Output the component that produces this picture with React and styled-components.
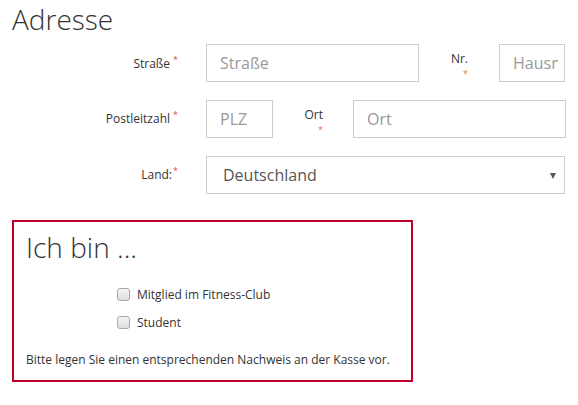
import React from "react";
import styled, { createGlobalStyle } from "styled-components";

const Global = createGlobalStyle`
  html, body { margin: 0; padding: 0; background: #fff; }
  body { font-family: "Open Sans", "Liberation Sans", sans-serif; color: #333; }
  * { box-sizing: border-box; }
`;

const Page = styled.div`
  width: 578px;
  height: 405px;
  padding: 0 0 0 12px;
  overflow: hidden;
`;

const Title = styled.h2`
  margin: 0;
  padding-top: 1px;
  height: 44px;
  font-weight: 300;
  font-size: 28px;
  line-height: 36px;
  color: #333;
`;

const Form = styled.div`
  display: flex;
  flex-direction: column;
  gap: 18px;
`;

const Row = styled.div`
  display: flex;
  align-items: flex-start;
`;

const Label = styled.label`
  width: ${(p) => p.$w}px;
  margin-left: ${(p) => p.$ml || 0}px;
  margin-right: ${(p) => p.$mr || 0}px;
  padding-top: ${(p) => p.$pt ?? 9}px;
  text-align: right;
  font-size: 12px;
  line-height: 13px;
  color: #333;
  flex: none;
`;

const Star = styled.span`
  color: #d9534f;
  font-size: 9px;
  vertical-align: 5px;
  margin-left: ${(p) => p.$gap ?? 3}px;
`;

const WrapStar = styled.span`
  color: #e07a3a;
  font-size: 9px;
  line-height: 9px;
  display: block;
  margin-top: 4px;
`;

const Input = styled.input`
  width: ${(p) => p.$w}px;
  height: 38px;
  flex: none;
  border: 1px solid #ccc;
  border-radius: 0;
  padding: 0 6px 0 13px;
  font-family: "Open Sans", "Liberation Sans", sans-serif;
  font-size: 16px;
  color: #555;
  background: #fff;
  outline: none;
  &::placeholder { color: #999; }
`;

const SelectBox = styled.div`
  position: relative;
  width: ${(p) => p.$w}px;
  height: 38px;
  border: 1px solid #ccc;
  display: flex;
  align-items: center;
  padding: 0 16px;
  font-size: 16px;
  color: #555;
`;

const Arrow = styled.span`
  position: absolute;
  right: 8px;
  top: 16px;
  width: 0;
  height: 0;
  border-left: 3px solid transparent;
  border-right: 3px solid transparent;
  border-top: 6px solid #555;
`;

const Box = styled.section`
  margin-top: 26px;
  width: 401px;
  height: 162px;
  border: 2px solid #c0002b;
  padding: 7px 12px 0 12px;
  display: flex;
  flex-direction: column;
`;

const BoxTitle = styled.h3`
  margin: 0;
  font-weight: 300;
  font-size: 28px;
  line-height: 36px;
  color: #333;
`;

const Checks = styled.div`
  margin-top: 21px;
  padding-left: 91px;
  display: flex;
  flex-direction: column;
  gap: 11px;
`;

const CheckRow = styled.label`
  display: flex;
  align-items: center;
  gap: 7px;
  font-size: 12px;
  line-height: 17px;
  color: #333;
`;

const Check = styled.span`
  width: 13px;
  height: 13px;
  border: 1px solid #a9a9a9;
  border-radius: 3px;
  background: linear-gradient(#f4f4f4, #dedede);
  flex: none;
`;

const Note = styled.p`
  margin: 20px 0 0 0;
  font-size: 12px;
  line-height: 17px;
  color: #333;
`;

export default function App() {
  return (
    <>
      <Global />
      <Page>
        <Title>Adresse</Title>
        <Form>
          <Row>
            <Label $w={166} $mr={28} $pt={9}>
              Straße<Star>*</Star>
            </Label>
            <Input $w={213} placeholder="Straße" />
            <Label $w={18} $ml={31} $mr={31} $pt={8}>
              Nr.<WrapStar>*</WrapStar>
            </Label>
            <Input $w={66} placeholder="Hausnummer" />
          </Row>
          <Row>
            <Label $w={166} $mr={28} $pt={8}>
              Postleitzahl<Star>*</Star>
            </Label>
            <Input $w={67} placeholder="PLZ" />
            <Label $w={22} $ml={28} $mr={30} $pt={8}>
              Ort<WrapStar>*</WrapStar>
            </Label>
            <Input $w={213} placeholder="Ort" />
          </Row>
          <Row>
            <Label $w={166} $mr={28} $pt={8}>
              Land:<Star $gap={1}>*</Star>
            </Label>
            <SelectBox $w={359}>
              Deutschland
              <Arrow />
            </SelectBox>
          </Row>
        </Form>
        <Box>
          <BoxTitle>Ich bin ...</BoxTitle>
          <Checks>
            <CheckRow>
              <Check />
              Mitglied im Fitness-Club
            </CheckRow>
            <CheckRow>
              <Check />
              Student
            </CheckRow>
          </Checks>
          <Note>Bitte legen Sie einen entsprechenden Nachweis an der Kasse vor.</Note>
        </Box>
      </Page>
    </>
  );
}
